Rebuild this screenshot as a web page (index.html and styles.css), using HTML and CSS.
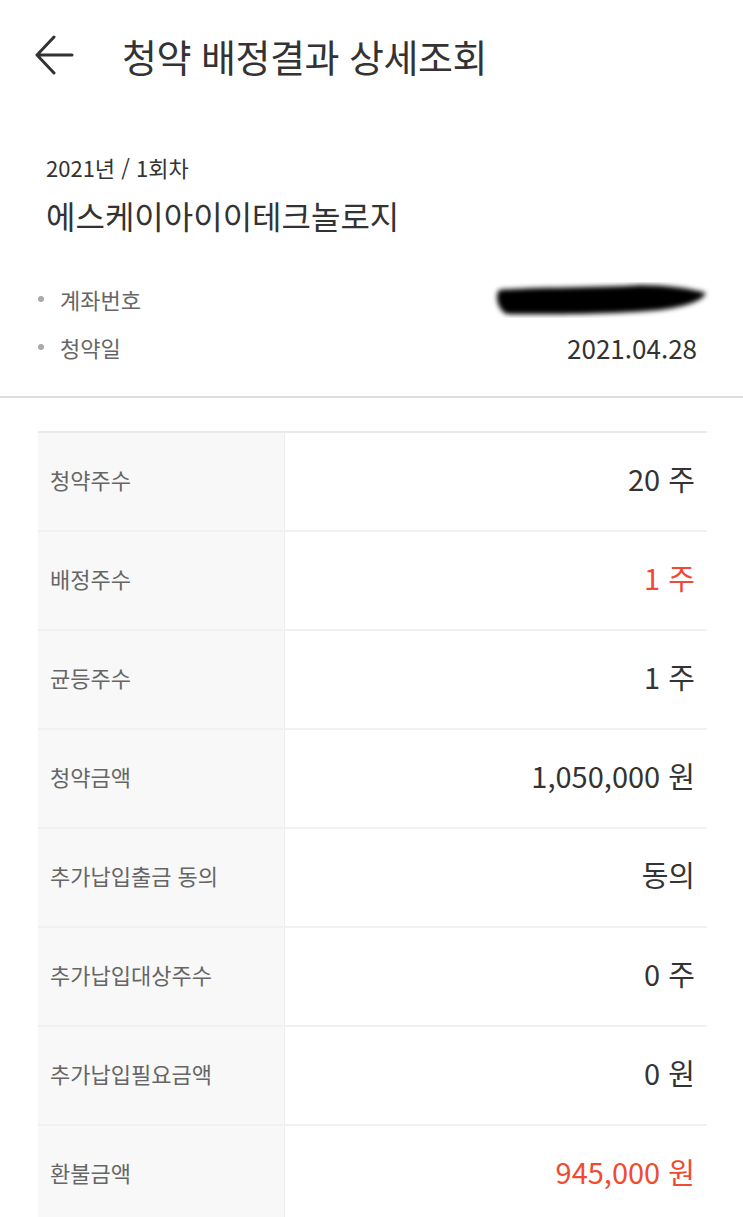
FILE: index.html
```html
<!DOCTYPE html>
<html lang="ko">
<head>
    <meta charset="UTF-8">
    <meta name="viewport" content="width=device-width, initial-scale=1.0">
    <title>청약 배정결과 상세조회</title>
    <link rel="stylesheet" href="styles.css">
</head>
<body>
    <header class="top-bar">
        <button class="back-btn" aria-label="뒤로">
            <svg width="40" height="44" viewBox="0 0 40 44">
                <path d="M19 4 L2 22 L19 40 M2 22 L37 22" fill="none" stroke="#333" stroke-width="3" stroke-linecap="round" stroke-linejoin="round"/>
            </svg>
        </button>
        <h1>청약 배정결과 상세조회</h1>
    </header>

    <section class="summary">
        <p class="round">2021년 / 1회차</p>
        <h2 class="company">에스케이아이이테크놀로지</h2>

        <ul class="info-list">
            <li>
                <span class="info-label">계좌번호</span>
                <span class="info-value redacted">
                    <!-- 계좌번호 가림 -->
                    <svg width="224" height="40" viewBox="0 0 224 40">
                        <defs>
                            <filter id="blur"><feGaussianBlur stdDeviation="2.5"/></filter>
                        </defs>
                        <path d="M9 11 C40 8 110 9 150 6 C175 6 200 9 216 14 C212 22 198 27 170 31 C130 35 60 36 16 35 C7 29 5 17 9 11 Z" fill="#000" filter="url(#blur)"/>
                    </svg>
                </span>
            </li>
            <li>
                <span class="info-label">청약일</span>
                <span class="info-value">2021.04.28</span>
            </li>
        </ul>
    </section>

    <section class="result">
        <table class="result-table">
            <tr><th>청약주수</th><td>20 주</td></tr>
            <tr><th>배정주수</th><td class="red">1 주</td></tr>
            <tr><th>균등주수</th><td>1 주</td></tr>
            <tr><th>청약금액</th><td>1,050,000 원</td></tr>
            <tr><th>추가납입출금 동의</th><td>동의</td></tr>
            <tr><th>추가납입대상주수</th><td>0 주</td></tr>
            <tr><th>추가납입필요금액</th><td>0 원</td></tr>
            <tr><th>환불금액</th><td class="red">945,000 원</td></tr>
        </table>
    </section>
</body>
</html>
```

FILE: styles.css
```css
* {
    box-sizing: border-box;
    margin: 0;
    padding: 0;
}

body {
    background: #fff;
    color: #333;
    font-family: 'Noto Sans CJK KR', 'Noto Sans', sans-serif;
    width: 743px;
    overflow: hidden;
}

.top-bar {
    display: flex;
    align-items: center;
    height: 112px;
    padding: 0 0 2px 35px;
}

.back-btn {
    background: none;
    border: none;
    width: 40px;
    height: 44px;
    margin-right: 47px;
    display: flex;
}

h1 {
    font-size: 38px;
    font-weight: 400;
    letter-spacing: -0.5px;
    color: #333;
}

.summary {
    padding: 40px 46px 25px 38px;
    border-bottom: 2px solid #ddd;
}

.round {
    font-size: 22px;
    line-height: 30px;
    padding-left: 8px;
}

.company {
    font-size: 32px;
    font-weight: 400;
    line-height: 40px;
    margin-top: 13px;
    padding-left: 8px;
}

.info-list {
    list-style: none;
    margin-top: 40px;
}

.info-list li {
    display: flex;
    justify-content: space-between;
    align-items: center;
    height: 48px;
}

.info-label {
    font-size: 22px;
    color: #666;
    display: flex;
    align-items: center;
}

.info-label::before {
    content: "";
    width: 6px;
    height: 6px;
    border-radius: 50%;
    background: #aaa;
    margin-right: 16px;
}

.info-value {
    font-size: 26px;
    color: #333;
}

.redacted {
    display: flex;
    margin-right: -17px;
}

.result {
    padding: 33px 36px 0 38px;
}

.result-table {
    width: 100%;
    border-collapse: collapse;
    border-top: 2px solid #eaeaea;
}

.result-table tr {
    height: 99px;
    border-bottom: 2px solid #f1f1f1;
}

.result-table th {
    width: 246px;
    background: #f8f8f8;
    border-right: 1px solid #eee;
    text-align: left;
    font-size: 22px;
    font-weight: 400;
    color: #666;
    padding: 0 0 6px 12px;
}

.result-table td {
    text-align: right;
    font-size: 29px;
    color: #333;
    padding: 0 12px 8px 0;
}

.result-table .red {
    color: #f04a33;
}
```
